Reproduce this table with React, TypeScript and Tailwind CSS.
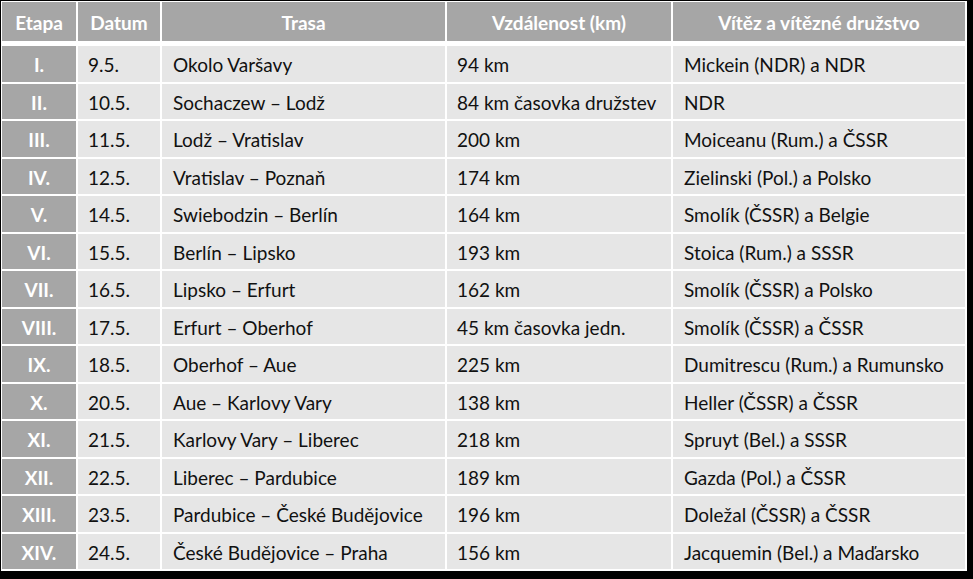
import * as React from "react";

type Stage = {
  etapa: string;
  datum: string;
  trasa: string;
  km: string;
  vitez: string;
};

const stages: Stage[] = [
  { etapa: "I.", datum: "9.5.", trasa: "Okolo Varšavy", km: "94 km", vitez: "Mickein (NDR) a NDR" },
  { etapa: "II.", datum: "10.5.", trasa: "Sochaczew – Lodž", km: "84 km časovka družstev", vitez: "NDR" },
  { etapa: "III.", datum: "11.5.", trasa: "Lodž – Vratislav", km: "200 km", vitez: "Moiceanu (Rum.) a ČSSR" },
  { etapa: "IV.", datum: "12.5.", trasa: "Vratislav – Poznaň", km: "174 km", vitez: "Zielinski (Pol.) a Polsko" },
  { etapa: "V.", datum: "14.5.", trasa: "Swiebodzin – Berlín", km: "164 km", vitez: "Smolík (ČSSR) a Belgie" },
  { etapa: "VI.", datum: "15.5.", trasa: "Berlín – Lipsko", km: "193 km", vitez: "Stoica (Rum.) a SSSR" },
  { etapa: "VII.", datum: "16.5.", trasa: "Lipsko – Erfurt", km: "162 km", vitez: "Smolík (ČSSR) a Polsko" },
  { etapa: "VIII.", datum: "17.5.", trasa: "Erfurt – Oberhof", km: "45 km časovka jedn.", vitez: "Smolík (ČSSR) a ČSSR" },
  { etapa: "IX.", datum: "18.5.", trasa: "Oberhof – Aue", km: "225 km", vitez: "Dumitrescu (Rum.) a Rumunsko" },
  { etapa: "X.", datum: "20.5.", trasa: "Aue – Karlovy Vary", km: "138 km", vitez: "Heller (ČSSR) a ČSSR" },
  { etapa: "XI.", datum: "21.5.", trasa: "Karlovy Vary – Liberec", km: "218 km", vitez: "Spruyt (Bel.) a SSSR" },
  { etapa: "XII.", datum: "22.5.", trasa: "Liberec – Pardubice", km: "189 km", vitez: "Gazda (Pol.) a ČSSR" },
  { etapa: "XIII.", datum: "23.5.", trasa: "Pardubice – České Budějovice", km: "196 km", vitez: "Doležal (ČSSR) a ČSSR" },
  { etapa: "XIV.", datum: "24.5.", trasa: "České Budějovice – Praha", km: "156 km", vitez: "Jacquemin (Bel.) a Maďarsko" },
];

const headers = ["Etapa", "Datum", "Trasa", "Vzdálenost (km)", "Vítěz a vítězné družstvo"];

export default function App() {
  return (
    <div className="h-[579px] w-[973px] overflow-hidden bg-black pl-px pt-px font-['Lato','Liberation_Sans',sans-serif]">
      <div className="w-[966px] bg-white p-px pb-[2px]">
        {/* Header */}
        <div className="grid grid-cols-[74px_82px_283px_224px_292px] gap-x-[2px]">
          {headers.map((h) => (
            <div
              key={h}
              className="flex h-[39px] items-center justify-center bg-[#a6a6a6] pt-[3px] text-[19px] font-bold text-white"
            >
              {h}
            </div>
          ))}
        </div>

        {/* Body */}
        <div className="mt-[5px] grid grid-cols-[74px_82px_283px_224px_292px] gap-[2px]">
          {stages.map((s) => (
            <React.Fragment key={s.etapa}>
              <div className="flex h-[35.5px] items-center justify-center bg-[#a6a6a6] pt-[3px] text-[19px] font-bold text-white">
                {s.etapa}
              </div>
              <div className="flex h-[35.5px] items-center bg-[#e6e6e6] pl-[10px] pt-[3px] text-[19px] text-[#111]">
                {s.datum}
              </div>
              <div className="flex h-[35.5px] items-center bg-[#e6e6e6] pl-[11px] pt-[3px] text-[19px] text-[#111]">
                {s.trasa}
              </div>
              <div className="flex h-[35.5px] items-center bg-[#e6e6e6] pl-[10px] pt-[3px] text-[19px] text-[#111]">
                {s.km}
              </div>
              <div className="flex h-[35.5px] items-center bg-[#e6e6e6] pl-[11px] pt-[3px] text-[19px] text-[#111]">
                {s.vitez}
              </div>
            </React.Fragment>
          ))}
        </div>
      </div>
    </div>
  );
}
